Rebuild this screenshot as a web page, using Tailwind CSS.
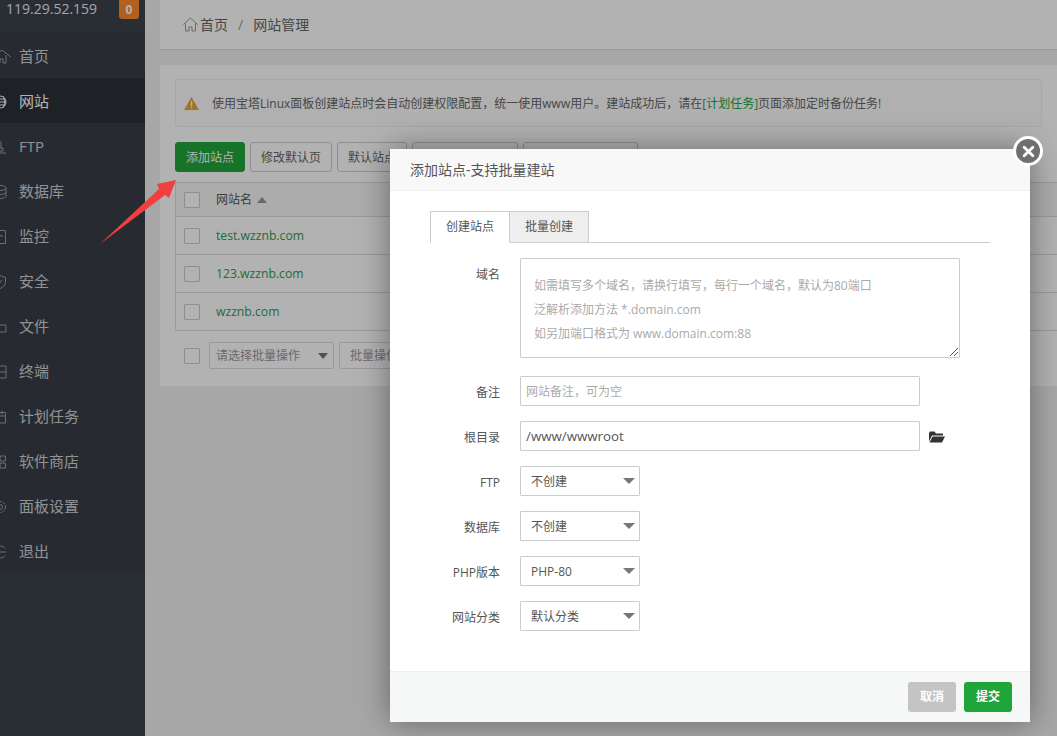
<!DOCTYPE html>
<html lang="en">
<head>
    <meta charset="UTF-8">
    <meta name="viewport" content="width=device-width, initial-scale=1.0">
    <title>网站管理</title>
    <script src="https://cdn.jsdelivr.net/npm/@tailwindcss/browser@4"></script>
</head>
<body class="w-[1057px] h-[736px] overflow-hidden relative bg-[#f0f0f0] text-[#555] font-['Open_Sans','Noto_Sans_CJK_SC',sans-serif] text-[13px]">
    <div class="flex h-[736px]">
        <!-- sidebar -->
        <div class="w-[145px] shrink-0 bg-[#3c434d] overflow-hidden">
            <div class="bg-[#383e47] h-[573px]">
                <div class="h-[33px] pl-[6px] pr-[6px] flex justify-between items-start text-[#ececec] text-sm bg-[#3c424b]">
                    <span class="leading-[17px]">119.29.52.159</span>
                    <span class="bg-[#ff8a2c] text-white font-bold text-xs w-[20px] h-[19px] rounded-b-[3px] flex items-center justify-center">0</span>
                </div>
                <div class="h-[45px] pt-[2px] flex items-center gap-[6px] text-[15px] text-[#d0d2d5]">
                    <svg class="w-[14px] h-[14px] shrink-0 -ml-[1px] text-[#9a9da2]" viewBox="0 0 14 14" fill="none" stroke="currentColor" stroke-width="1"><path d="M-6 7 3 0l9 7M-2 6v7h3v-4h3v4h3V5"/></svg><span>首页</span>
                </div>
                <div class="h-[45px] pt-[2px] flex items-center gap-[6px] text-[15px] text-white bg-[#2c3138]">
                    <svg class="w-[14px] h-[14px] shrink-0 -ml-[1px]" viewBox="0 0 14 14" fill="none" stroke="currentColor" stroke-width="1"><circle cx="1" cy="7" r="6"/><path d="M-5 7H7M-4 4H6M-4 10H6M4 1c2 4 2 8 0 12"/></svg><span>网站</span>
                </div>
                <div class="h-[45px] pt-[2px] flex items-center gap-[6px] text-[15px] text-[#d0d2d5]">
                    <svg class="w-[14px] h-[14px] shrink-0 -ml-[1px] text-[#9a9da2]" viewBox="0 0 14 14" fill="none" stroke="currentColor" stroke-width="1"><path d="M-2 8V3a2 2 0 0 1 4 0v5M-3 8h7v3h-7zM-3 13h10"/></svg><span>FTP</span>
                </div>
                <div class="h-[45px] pt-[2px] flex items-center gap-[6px] text-[15px] text-[#d0d2d5]">
                    <svg class="w-[14px] h-[14px] shrink-0 -ml-[1px] text-[#9a9da2]" viewBox="0 0 14 14" fill="none" stroke="currentColor" stroke-width="1"><ellipse cx="1" cy="3" rx="6" ry="2.5"/><path d="M7 3v8c0 1.500-3 2.500-6 2.500M7 7c0 1.500-3 2.500-6 2.500"/></svg><span>数据库</span>
                </div>
                <div class="h-[45px] pt-[2px] flex items-center gap-[6px] text-[15px] text-[#d0d2d5]">
                    <svg class="w-[14px] h-[14px] shrink-0 -ml-[1px] text-[#9a9da2]" viewBox="0 0 14 14" fill="none" stroke="currentColor" stroke-width="1"><path d="M-4 .5h10.500v13H-4zM-1 9l3-4 2 2"/></svg><span>监控</span>
                </div>
                <div class="h-[45px] pt-[2px] flex items-center gap-[6px] text-[15px] text-[#d0d2d5]">
                    <svg class="w-[14px] h-[14px] shrink-0 -ml-[1px] text-[#9a9da2]" viewBox="0 0 14 14" fill="none" stroke="currentColor" stroke-width="1"><path d="M1 .5 6.500 2.500V7c0 3-2.500 5.500-5.500 6.500C-2 12.500-4.500 10-4.500 7V2.500zM3 5-1 10"/></svg><span>安全</span>
                </div>
                <div class="h-[45px] pt-[2px] flex items-center gap-[6px] text-[15px] text-[#d0d2d5]">
                    <svg class="w-[14px] h-[14px] shrink-0 -ml-[1px] text-[#9a9da2]" viewBox="0 0 14 14" fill="none" stroke="currentColor" stroke-width="1"><path d="M-4 3.500h4l1 1.500h6v7H-4z"/></svg><span>文件</span>
                </div>
                <div class="h-[45px] pt-[2px] flex items-center gap-[6px] text-[15px] text-[#d0d2d5]">
                    <svg class="w-[14px] h-[14px] shrink-0 -ml-[1px] text-[#9a9da2]" viewBox="0 0 14 14" fill="none" stroke="currentColor" stroke-width="1"><path d="M-4 1h11v12H-4zM-4 7H7"/></svg><span>终端</span>
                </div>
                <div class="h-[45px] pt-[2px] flex items-center gap-[6px] text-[15px] text-[#d0d2d5]">
                    <svg class="w-[14px] h-[14px] shrink-0 -ml-[1px] text-[#9a9da2]" viewBox="0 0 14 14" fill="none" stroke="currentColor" stroke-width="1"><path d="M-4 2.500h10.500V13H-4zM3 .5v4M-4 6h10.500"/></svg><span>计划任务</span>
                </div>
                <div class="h-[45px] pt-[2px] flex items-center gap-[6px] text-[15px] text-[#d0d2d5]">
                    <svg class="w-[14px] h-[14px] shrink-0 -ml-[1px] text-[#9a9da2]" viewBox="0 0 14 14" fill="none" stroke="currentColor" stroke-width="1.200"><rect x="1" y="1" width="5.500" height="5" rx="1"/><rect x="1" y="8" width="5.500" height="5" rx="1"/></svg><span>软件商店</span>
                </div>
                <div class="h-[45px] pt-[2px] flex items-center gap-[6px] text-[15px] text-[#d0d2d5]">
                    <svg class="w-[14px] h-[14px] shrink-0 -ml-[1px] text-[#9a9da2]" viewBox="0 0 14 14" fill="none" stroke="currentColor" stroke-width="1"><circle cx="1" cy="7" r="5.500" stroke-dasharray="2.500 1"/><circle cx="1" cy="7" r="2.500"/></svg><span>面板设置</span>
                </div>
                <div class="h-[45px] pt-[2px] flex items-center gap-[6px] text-[15px] text-[#d0d2d5]">
                    <svg class="w-[14px] h-[14px] shrink-0 -ml-[1px] text-[#9a9da2]" viewBox="0 0 14 14" fill="none" stroke="currentColor" stroke-width="1"><path d="M6 3.500A6 6 0 1 0 6 10.500M-1 7h8"/></svg><span>退出</span>
                </div>
            </div>
        </div>

        <!-- main -->
        <div class="flex-1 pl-[15px] min-w-0">
            <div class="h-[50px] bg-white border-b border-[#ddd] flex items-center pl-[23px] text-sm text-[#666]">
                <svg class="w-[15px] h-[15px] mr-[2px]" viewBox="0 0 15 15" fill="none" stroke="#999" stroke-width="1"><path d="M.5 7.500 7.500 1l7 6.500M2.500 6.500V14h3.500v-4h3v4h3.500V6.500"/></svg>
                <span>首页</span><span class="mx-[10px] text-[#999]">/</span><span>网站管理</span>
            </div>
            <div class="mt-[15px] h-[321px] bg-white px-[15px] pt-[14px]">
                <div class="h-[48px] border border-[#eee] bg-[#fcfcfc] rounded-[2px] flex items-center pl-[8px] pt-[1px] text-xs text-[#666]">
                    <svg class="w-[15px] h-[13px] mr-[13px] shrink-0" viewBox="0 0 16 14"><path d="M8 0 16 14H0z" fill="#e8a33d"/><path d="M7.200 4.500h1.600V10H7.200zM7.200 11h1.600v1.500H7.200z" fill="#fff"/></svg>
                    <span>使用宝塔Linux面板创建站点时会自动创建权限配置，统一使用www用户。建站成功后，请在<span class="text-[#20a53a]">[计划任务]</span>页面添加定时备份任务!</span>
                </div>
                <div class="mt-[15px] h-[30px] flex gap-[5px] text-xs text-[#666]">
                    <div class="w-[70px] bg-[#20a53a] border border-[#20a53a] rounded-[3px] text-white flex items-center justify-center pt-[1px]">添加站点</div>
                    <div class="w-[82px] bg-white border border-[#ccc] rounded-[3px] flex items-center justify-center pt-[1px]">修改默认页</div>
                    <div class="w-[70px] bg-white border border-[#ccc] rounded-[3px] flex items-center justify-center pt-[1px]">默认站点</div>
                    <div class="w-[106px] bg-white border border-[#ccc] rounded-[3px]"></div>
                    <div class="w-[115px] bg-white border border-[#ccc] rounded-[3px]"></div>
                </div>
                <div class="mt-[10px] border border-[#ddd] border-r-0 -mr-[15px]">
                    <div class="h-[34px] bg-[#f6f6f6] border-b border-[#ddd] flex items-center pl-[8px] text-xs">
                        <span class="w-[16px] h-[16px] bg-white border border-[#ccc] rounded-[1px] mr-[16px]"></span>
                        <span>网站名</span>
                        <span class="ml-[5px] w-0 h-0 border-x-[5px] border-x-transparent border-b-[6px] border-b-[#999]"></span>
                    </div>
                    <div class="h-[38px] border-b border-[#ddd] flex items-center pl-[8px] text-[12.2px] text-[#359950]">
                        <span class="w-[16px] h-[16px] bg-white border border-[#ccc] rounded-[1px] mr-[16px]"></span>
                        <span class="pt-[2px]">test.wzznb.com</span>
                    </div>
                    <div class="h-[38px] border-b border-[#ddd] flex items-center pl-[8px] text-[12.2px] text-[#359950]">
                        <span class="w-[16px] h-[16px] bg-white border border-[#ccc] rounded-[1px] mr-[16px]"></span>
                        <span class="pt-[2px]">123.wzznb.com</span>
                    </div>
                    <div class="h-[37px] flex items-center pl-[8px] text-[12.2px] text-[#359950]">
                        <span class="w-[16px] h-[16px] bg-white border border-[#ccc] rounded-[1px] mr-[16px]"></span>
                        <span class="pt-[2px]">wzznb.com</span>
                    </div>
                </div>
                <div class="mt-[11px] h-[27px] flex items-center pl-[9px] text-xs text-[#999]">
                    <span class="w-[16px] h-[16px] bg-white border border-[#ccc] rounded-[1px] mr-[9px]"></span>
                    <div class="w-[125px] h-[27px] border border-[#ddd] rounded-[2px] flex items-center justify-between pl-[6px] pr-[5px]">
                        <span>请选择批量操作</span>
                        <span class="w-0 h-0 border-x-[5px] border-x-transparent border-t-[6px] border-t-[#777]"></span>
                    </div>
                    <div class="ml-[5px] w-[70px] h-[27px] border border-[#ddd] rounded-[2px] flex items-center pl-[10px]">批量操作</div>
                </div>
            </div>
        </div>
    </div>

    <!-- dim layer -->
    <div class="absolute inset-0 bg-black/30"></div>

    <!-- red arrow from the screenshot annotation -->
    <svg class="absolute left-0 top-0 w-[1057px] h-[736px] pointer-events-none" viewBox="0 0 1057 736">
        <path d="M100 244 159 189 157 184 176 180 169 198 165 195z" fill="#ef3f3f"/>
    </svg>

    <!-- modal -->
    <div class="absolute left-[390px] top-[149px] w-[640px] h-[573px] bg-white flex flex-col shadow-[0_0_30px_rgba(0,0,0,0.4)]">
        <div class="h-[42px] shrink-0 bg-[#f8f8f8] border-b border-[#eee] flex items-center pl-[20px] text-[14px] text-[#555]">添加站点-支持批量建站</div>
        <div class="flex-1 pt-[20px] px-[40px] text-xs text-[#555]">
            <div class="flex w-[560px] h-[32px] border-b border-[#ccc] text-xs">
                <div class="w-[80px] h-[32px] bg-white border border-[#ccc] border-b-white flex items-center justify-center">创建站点</div>
                <div class="w-[79px] h-[32px] bg-[#eee] border border-l-0 border-[#ccc] flex items-center justify-center">批量创建</div>
            </div>
            <div class="mt-[15px] flex">
                <div class="w-[70px] text-right pt-[7px] leading-[20px]">域名</div>
                <div class="relative ml-[20px] w-[440px] h-[100px] border border-[#ccc] rounded-[1px] pt-[15px] pl-[13px] text-[#aaa] leading-[24px]">
                    <div>如需填写多个域名，请换行填写，每行一个域名，默认为80端口</div>
                    <div>泛解析添加方法 *.domain.com</div>
                    <div>如另加端口格式为 www.domain.com:88</div>
                    <svg class="absolute right-0 bottom-0 w-[10px] h-[10px]" viewBox="0 0 10 10" stroke="#555" stroke-width="1"><path d="M1 9 9 1M5 9 9 5"/></svg>
                </div>
            </div>
            <div class="mt-[18px] flex items-center h-[30px]">
                <div class="w-[70px] text-right pt-[3px]">备注</div>
                <div class="ml-[20px] w-[400px] h-[30px] border border-[#ccc] rounded-[1px] flex items-center pl-[5px] pt-[1px] text-[#aaa]">网站备注，可为空</div>
            </div>
            <div class="mt-[15px] flex items-center h-[30px]">
                <div class="w-[70px] text-right pt-[3px]">根目录</div>
                <div class="ml-[20px] w-[400px] h-[30px] border border-[#ccc] rounded-[1px] flex items-center pl-[5px] pt-[1px] text-[#555] text-[13.3px]">/www/wwwroot</div>
                <svg class="ml-[9px] w-[16px] h-[13px]" viewBox="0 0 16 13" fill="#333"><path d="M0 3V11.500L3 5.500H14V3.500H7L5.500 1.500H1z"/><path d="M3.500 6.500H16L13 12.500H.5z"/></svg>
            </div>
            <div class="mt-[15px] flex items-center h-[30px]">
                <div class="w-[70px] text-right pt-[3px]">FTP</div>
                <div class="ml-[20px] w-[120px] h-[30px] border border-[#ccc] rounded-[1px] flex items-center justify-between pl-[10px] pr-[4px]"><span class="pt-[1px]">不创建</span><span class="w-0 h-0 border-x-[6px] border-x-transparent border-t-[6px] border-t-[#777]"></span></div>
            </div>
            <div class="mt-[15px] flex items-center h-[30px]">
                <div class="w-[70px] text-right pt-[3px]">数据库</div>
                <div class="ml-[20px] w-[120px] h-[30px] border border-[#ccc] rounded-[1px] flex items-center justify-between pl-[10px] pr-[4px]"><span class="pt-[1px]">不创建</span><span class="w-0 h-0 border-x-[6px] border-x-transparent border-t-[6px] border-t-[#777]"></span></div>
            </div>
            <div class="mt-[15px] flex items-center h-[30px]">
                <div class="w-[70px] text-right pt-[3px]">PHP版本</div>
                <div class="ml-[20px] w-[120px] h-[30px] border border-[#ccc] rounded-[1px] flex items-center justify-between pl-[10px] pr-[4px]"><span class="pt-[1px]">PHP-80</span><span class="w-0 h-0 border-x-[6px] border-x-transparent border-t-[6px] border-t-[#777]"></span></div>
            </div>
            <div class="mt-[15px] flex items-center h-[30px]">
                <div class="w-[70px] text-right pt-[3px]">网站分类</div>
                <div class="ml-[20px] w-[120px] h-[30px] border border-[#ccc] rounded-[1px] flex items-center justify-between pl-[10px] pr-[4px]"><span class="pt-[1px]">默认分类</span><span class="w-0 h-0 border-x-[6px] border-x-transparent border-t-[6px] border-t-[#777]"></span></div>
            </div>
        </div>
        <div class="h-[51px] shrink-0 bg-[#f6f8f8] border-t border-[#eee] flex items-center justify-end gap-[8px] pr-[18px] text-xs font-bold text-white">
            <div class="w-[48px] h-[30px] bg-[#c4c4c4] rounded-[3px] flex items-center justify-center">取消</div>
            <div class="w-[48px] h-[30px] bg-[#20a53a] rounded-[3px] flex items-center justify-center">提交</div>
        </div>
        <div class="absolute -right-[13px] -top-[13px] w-[30px] h-[30px] rounded-full bg-[#6f6f6f] border-[3px] border-white flex items-center justify-center">
            <svg class="w-[13px] h-[13px]" viewBox="0 0 12 12" stroke="#fff" stroke-width="2.600" stroke-linecap="round"><path d="M2 2 10 10M10 2 2 10"/></svg>
        </div>
    </div>
</body>
</html>
